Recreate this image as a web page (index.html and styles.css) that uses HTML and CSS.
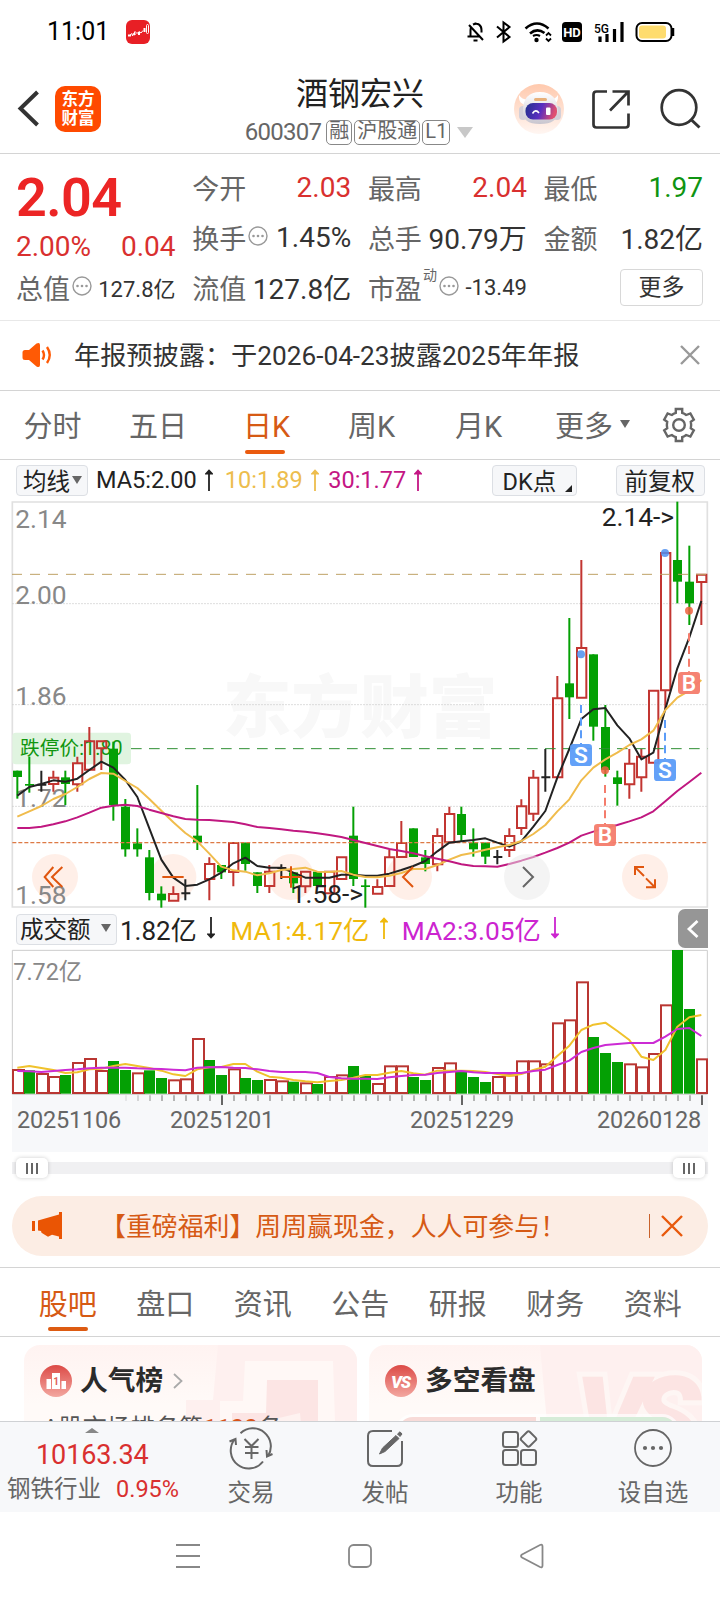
FILE: index.html
```html
<!DOCTYPE html>
<html lang="zh-CN">
<head>
<meta charset="utf-8">
<meta name="viewport" content="width=720">
<title>酒钢宏兴 600307</title>
<link rel="stylesheet" href="styles.css">
</head>
<body>
<div class="screen">
  <div class="status">
    <span class="clock">11:01</span>
    <svg class="app-dot" width="24" height="24" viewBox="0 0 24 24"><rect width="24" height="24" rx="6" fill="#e81f25"/><path d="M2 15.500h3M8 13l1 2M13 12v3M18.500 8v4" stroke="#fff" stroke-width="2"/><path d="M4 15l2-1.500.5 2.500L9 11.500l2 2 2-2 2 1.500 2-2.500" stroke="#fff" fill="none"/><rect x="20.500" y="4.500" width="2" height="9" rx="1" stroke="#fff" fill="none"/></svg>
    <svg class="sys" width="216" height="26" viewBox="464 19 216 26" fill="none" stroke="#000" stroke-width="2">
      <path d="M469 25l14 15M480 36.500h-12.500M470.500 36v-6c0-1.500.4-2.700 1-3.600M473 24.500c5-2.500 8.500 1 8.500 5.500v2.500M473.500 40.500h4M475.500 22.500v2"/>
      <path d="M497 26.500l12.500 10.500-6 4.500v-19l6 4.500-12.500 10.500"/>
      <path d="M525.500 28.500q11.500-10 23 0M530 33.500q7-6 14.500-.5" stroke-width="2.600"/><circle cx="536.500" cy="40" r="2.200" fill="#000" stroke="none"/><path d="M533 36q3.500-2 7 0" stroke-width="2.200"/><path d="M546 35.500l2.500-2.500 2.500 2.500M546 38.500l2.500 2.500 2.500-2.500" stroke-width="1.800"/>
      <rect x="562" y="22" width="20" height="20" rx="3.500" fill="#000" stroke="none"/>
      <text x="572" y="37" class="hd">HD</text>
      <text x="594" y="32.500" class="g5">5G</text>
      <path d="M600 36.500v5.500M607 34v8M614.500 29v13M622 22v20" stroke-width="3.200"/>
      <rect x="636.500" y="23" width="35" height="18" rx="5.500"/><rect x="639" y="25.500" width="27" height="13" rx="3" fill="#fedc6e" stroke="none"/><path d="M673 28v8" stroke-width="2.500"/>
    </svg>
  </div>

  <header class="titlebar">
    <svg class="back" width="24" height="40" viewBox="0 0 24 40"><path d="M20.500 3L3.500 19.500 20.500 36" fill="none" stroke="#333" stroke-width="4"/></svg>
    <div class="logo"><span>东方</span><span>财富</span></div>
    <div class="name">
      <h1>酒钢宏兴</h1>
      <p><span class="code">600307</span><i>融</i><i>沪股通</i><i>L1</i><b class="tri"></b></p>
    </div>
    <svg class="tools" width="190" height="52" viewBox="512 82 190 52" fill="none" stroke="#333">
      <defs>
        <linearGradient id="peach" x1="0" y1="0" x2="0" y2="1"><stop offset="0" stop-color="#ffc9ad"/><stop offset="1" stop-color="#fff6f2"/></linearGradient>
        <linearGradient id="visor" x1="0" y1="0" x2="1" y2=".2"><stop offset="0" stop-color="#20308c"/><stop offset=".55" stop-color="#5a2ec0"/><stop offset="1" stop-color="#e05070"/></linearGradient>
        <linearGradient id="shell" x1="0" y1="0" x2="0" y2="1"><stop offset="0" stop-color="#fff"/><stop offset="1" stop-color="#c9c6cf"/></linearGradient>
      </defs>
      <g stroke="none">
        <circle cx="539" cy="109" r="25" fill="url(#peach)"/>
        <path d="M519 95q-1 10 9 10l3-6q-8 2-12-4zM558 95q1 10-9 10l-3-6q8 2 12-4z" fill="#fff"/>
        <rect x="519" y="106" width="8" height="14" rx="4" fill="#d4d0d8"/><rect x="553" y="106" width="8" height="14" rx="4" fill="#d4d0d8"/>
        <path d="M523 111q0-19 17-19t18 19q0 13-18 13t-17-13z" fill="url(#shell)"/>
        <rect x="534" y="98" width="13" height="3" rx="1.500" fill="#e8b07a"/>
        <rect x="525.500" y="103" width="31.500" height="16.500" rx="7.500" fill="url(#visor)"/>
        <rect x="546" y="107.500" width="4.500" height="7.500" rx="1" fill="#fff"/>
      </g>
      <path d="M532.500 113.500q3.200-5 6.500-.5" stroke="#fff" stroke-width="1.600"/>
      <path d="M607 91.500h-10.500q-3 0-3 3v30q0 3 3 3h29q3 0 3-3v-11M612.500 91.500h16v14M628 92l-18 18.500" stroke-width="2.700"/>
      <circle cx="679" cy="107.500" r="17.300" stroke-width="2.700"/><path d="M690.500 119l9 8.500" stroke-width="3"/>
    </svg>
  </header>

  <section class="quote">
    <div class="col main">
      <strong>2.04</strong>
      <div class="chg"><span>2.00%</span><span>0.04</span></div>
      <div class="cell"><label>总值</label><svg class="dots"><use href="#more"/></svg><em class="sm">127.8亿</em></div>
    </div>
    <div class="col">
      <div class="cell"><label>今开</label><em class="red">2.03</em></div>
      <div class="cell"><label>换手</label><svg class="dots"><use href="#more"/></svg><em>1.45%</em></div>
      <div class="cell"><label>流值</label><em>127.8亿</em></div>
    </div>
    <div class="col">
      <div class="cell"><label>最高</label><em class="red">2.04</em></div>
      <div class="cell"><label>总手</label><em>90.79万</em></div>
      <div class="cell"><label>市盈</label><sup>动</sup><svg class="dots"><use href="#more"/></svg><em class="sm">-13.49</em></div>
    </div>
    <div class="col">
      <div class="cell"><label>最低</label><em class="green">1.97</em></div>
      <div class="cell"><label>金额</label><em>1.82亿</em></div>
      <div class="cell"><button class="more">更多</button></div>
    </div>
    <svg width="0" height="0"><symbol id="more" viewBox="0 0 20 20"><circle cx="10" cy="10" r="9" fill="none" stroke="#999" stroke-width="1.400"/><g fill="#999"><circle cx="5.500" cy="10" r="1.300"/><circle cx="10" cy="10" r="1.300"/><circle cx="14.500" cy="10" r="1.300"/></g></symbol></svg>
  </section>

  <section class="notice">
    <svg width="30" height="26" viewBox="0 0 30 26"><path d="M3 8h4l7.500-6.500Q18 0 18 3v20q0 3-3.500 1.500L7 18H3q-2.500 0-2.500-2.500v-5Q.5 8 3 8z" fill="#ff5a05"/><path d="M20.500 8.500q3 4.500 0 9M25 5q5.500 8 0 16" fill="none" stroke="#ff5a05" stroke-width="2.400"/></svg>
    <span>年报预披露：于2026-04-23披露2025年年报</span>
    <svg class="close" width="20" height="20" viewBox="0 0 20 20"><path d="M1 1l18 18M19 1L1 19" stroke="#999" stroke-width="2.400"/></svg>
  </section>

  <nav class="periods">
    <a>分时</a><a>五日</a><a class="on">日K</a><a>周K</a><a>月K</a><a>更多<b class="tri"></b></a>
    <svg width="36" height="36" viewBox="0 0 36 36" fill="none" stroke="#666" stroke-width="2.400"><path d="M14.800 2h6.400v3.800q2.300.8 4 2.200l4.200-1.600 3.400 6.200-3 2.200q.7 3.200 0 6.400l3 2.200-3.400 6.200-4.200-1.600q-1.700 1.400-4 2.200V34h-6.400v-3.800q-2.300-.8-4-2.200l-4.200 1.600-3.400-6.200 3-2.200q-.7-3.200 0-6.400l-3-2.200 3.400-6.200L10.800 8q1.700-1.400 4-2.200z"/><circle cx="18" cy="18" r="5.800"/></svg>
  </nav>

  <div class="legend ma">
    <span class="chip">均线<b class="tri"></b></span>
    <span class="k">MA5:2.00<svg class="arr"><use href="#up"/></svg></span>
    <span class="y">10:1.89<svg class="arr"><use href="#up"/></svg></span>
    <span class="m">30:1.77<svg class="arr"><use href="#up"/></svg></span>
    <span class="chip dk">DK点<svg class="corner" viewBox="0 0 7 7"><path d="M7 0v7H0z" fill="#222"/></svg></span>
    <span class="chip fq">前复权</span>
    <svg width="0" height="0"><symbol id="up" viewBox="0 0 8 22"><path d="M4 22V2M1.300 4.500L4 1.500l2.700 3z" fill="currentColor" stroke="currentColor" stroke-width="1.800"/></symbol><symbol id="down" viewBox="0 0 8 22"><path d="M4 0v20M1.300 17.500L4 20.500l2.700-3z" fill="currentColor" stroke="currentColor" stroke-width="1.800"/></symbol></svg>
  </div>

  <svg id="price" class="plot" width="720" height="410" viewBox="0 -450 2160 1230"></svg>

  <div class="legend vol">
    <span class="chip">成交额<b class="tri"></b></span>
    <span class="k">1.82亿<svg class="arr"><use href="#down"/></svg></span>
    <span class="y">MA1:4.17亿<svg class="arr"><use href="#up"/></svg></span>
    <span class="m">MA2:3.05亿<svg class="arr"><use href="#down"/></svg></span>
    <span class="drawer"><svg width="14" height="20" viewBox="0 0 14 20"><path d="M11.500 2L3 10l8.500 8" fill="none" stroke="#fff" stroke-width="2.800"/></svg></span>
  </div>

  <svg id="volume" class="plot" width="720" height="146" viewBox="0 57 2160 438"></svg>

  <div class="axis">
    <svg id="ticks" width="696" height="12" viewBox="36 497 2088 36"></svg>
    <div class="dates"><span>20251106</span><span>20251201</span><span>20251229</span><span>20260128</span></div>
  </div>

  <div class="slider"><i class="grip"><b></b><b></b><b></b></i><i class="grip"><b></b><b></b><b></b></i></div>

  <section class="promo">
    <svg width="30" height="28" viewBox="0 0 30 28" fill="#ea5504"><path d="M0 9h3v10H0zM6 8.500L27 2.500V0h3v27h-3v-2.500l-7-1.800-4 2-6.500-4L9 19l-3-.5z"/></svg>
    <span class="msg">【重磅福利】周周赢现金，人人可参与！</span>
    <span class="bar"></span>
    <svg width="22" height="22" viewBox="0 0 22 22"><path d="M1 1l20 20M21 1L1 21" stroke="#e8590c" stroke-width="2.400"/></svg>
  </section>

  <nav class="tabs"><a class="on">股吧</a><a>盘口</a><a>资讯</a><a>公告</a><a>研报</a><a>财务</a><a>资料</a></nav>

  <section class="cards">
    <article class="card">
      <svg class="deco" width="333" height="100" viewBox="0 0 333 100"><path d="M194 0h139v100H162V55h27z" fill="#fef0ef"/><path d="M221 16h88l2 60v24h-30l-8-20H196V56h23z" fill="#fff8f6"/><path d="M243 35h51v65h-86V68h34z" fill="#fce5e4"/><path d="M242 76l34-8 3 32h-37z" fill="#fef2f0"/></svg>
      <h2><svg width="32" height="32" viewBox="0 0 32 32"><use href="#disc"/><path d="M6.500 14h4.500v10H6.500zM12 8h8v16h-8zM21.500 16H26v8h-4.500z" fill="#fff"/><text x="16" y="20" class="no1">1</text></svg>人气榜<svg class="chev" width="10" height="18" viewBox="0 0 10 18"><path d="M1 2l7.500 7L1 16" fill="none" stroke="#aaa" stroke-width="1.800"/></svg></h2>
      <p>A股市场排名第<b>1100</b>名</p>
    </article>
    <article class="card">
      <svg class="deco" width="333" height="77" viewBox="0 0 333 77"><path d="M171 0h162v100H180z" fill="#fef0ef"/><text x="206" y="112" class="vs-lg">VS</text></svg>
      <h2><svg width="32" height="32" viewBox="0 0 32 32"><use href="#disc"/><text x="15.500" y="22.500" class="vs">VS</text></svg>多空看盘</h2>
      <div class="versus"><i></i><i></i></div>
    </article>
    <svg width="0" height="0"><defs><linearGradient id="dg" x1="0" y1="0" x2="0" y2="1"><stop offset="0" stop-color="#dc4a46"/><stop offset="1" stop-color="#f3a7a0"/></linearGradient></defs><symbol id="disc" viewBox="0 0 32 32"><circle cx="16" cy="16" r="16" fill="url(#dg)"/></symbol></svg>
  </section>

  <footer class="dock">
    <div class="index"><b class="caret"></b><strong>10163.34</strong><p><span>钢铁行业</span><em>0.95%</em></p></div>
    <a><svg width="44" height="40" viewBox="0 0 44 40" fill="none" stroke="#666" stroke-width="2"><path d="M11.500 5.200A18 18 0 0 1 39 28M34 33.500A18 18 0 0 1 5.500 11.500M.5 13.500l6-2.500.5 6M43.500 26l-5.500 2.500-.5-6.500M15.500 11l7 7 7-7M22.500 18v13M16 19h13.500M16 25h13.500"/></svg>交易</a>
    <a><svg width="40" height="40" viewBox="0 0 40 40" fill="none" stroke="#666" stroke-width="2"><path d="M27 3H8Q3 3 3 8v25q0 5 5 5h24q5 0 5-5V13"/><path d="M14.500 26l3-6L31 7.500l3 3L20 23.500zM32.500 6l2.500-2.200 2 2.200-2 2.500z" fill="#666" stroke-width="1"/></svg>发帖</a>
    <a><svg width="40" height="40" viewBox="0 0 40 40" fill="none" stroke="#666" stroke-width="2"><rect x="4" y="4" width="15" height="15" rx="2.500"/><rect x="4" y="22" width="15" height="15" rx="2.500"/><rect x="22" y="22" width="15" height="15" rx="2.500"/><rect x="23.500" y="5" width="12" height="12" rx="2" transform="rotate(45 29.500 11)"/></svg>功能</a>
    <a><svg width="40" height="40" viewBox="0 0 40 40" fill="none" stroke="#666" stroke-width="1.800"><circle cx="20" cy="20" r="18"/><g fill="#666" stroke="none"><circle cx="12" cy="20" r="2.100"/><circle cx="20" cy="20" r="2.100"/><circle cx="28" cy="20" r="2.100"/></g></svg>设自选</a>
  </footer>

  <div class="sysnav">
    <svg width="24" height="26" viewBox="0 0 24 26"><path d="M0 2h24M0 13h24M0 24h24" stroke="#888" stroke-width="1.800"/></svg>
    <svg width="24" height="26" viewBox="0 0 24 26"><rect x="1" y="2" width="22" height="22" rx="4.500" fill="none" stroke="#888" stroke-width="1.800"/></svg>
    <svg width="24" height="26" viewBox="0 0 24 26"><path d="M2 11.500L20 2q2.500-1 2.500 1.500v19q0 2.500-2.500 1.500L2 14.500q-2-1.500 0-3z" fill="none" stroke="#888" stroke-width="1.800"/></svg>
  </div>
</div>
<script src="chart.js"></script>
</body>
</html>
```
FILE: styles.css
```css
* { box-sizing: border-box; }
body { margin: 0; background: #fff; color: #333; font-family: Roboto, "Noto Sans CJK SC", sans-serif; }
h1, h2, p { margin: 0; font-weight: 400; }
em, i { font-style: normal; }
svg { display: block; flex: none; }
.screen { width: 720px; height: 1600px; display: flex; flex-direction: column; overflow: hidden; }
.screen > * { flex: none; }
.tri { display: inline-block; width: 0; height: 0; border: solid transparent; border-width: 8px 5px 0; border-top-color: #666; }

/* status bar */
.status { height: 64px; display: flex; align-items: center; padding: 0 40px 0 47px; color: #000; }
.clock { font-size: 25px; line-height: 30px; width: 79px; }
.sys { margin-left: auto; }
.hd { font: 700 13px Roboto, sans-serif; fill: #fff; stroke: none; text-anchor: middle; }
.g5 { font: 500 12px Roboto, sans-serif; fill: #000; stroke: none; }

/* title */
.titlebar { height: 90px; border-bottom: 1px solid #d4d4d4; display: flex; align-items: flex-start; padding: 0 18px 0 17px; }
.back { margin-top: 25px; }
.logo { margin: 22px 0 0 14px; width: 46px; height: 46px; border-radius: 10px; background: #ff4a00; color: #fff; font-size: 16.500px; font-weight: 700; line-height: 19px; display: flex; flex-direction: column; align-items: center; justify-content: center; }
.name { width: 411px; display: flex; flex-direction: column; align-items: center; }
.name h1 { font-size: 32px; line-height: 40px; margin-top: 10px; margin-left: 107px; color: #222; }
.name p { display: flex; align-items: center; height: 28px; margin: 4px 0 0 105px; color: #666; font-size: 24px; }
.name .code { letter-spacing: -.7px; margin-right: 5px; }
.name i { border: 1.500px solid #888; border-radius: 5px; height: 25px; font-size: 20px; line-height: 20px; padding: 0 2px; margin-right: 2px; }
.name .tri { border-width: 11px 8px 0; border-top-color: #c8c8c8; margin-left: 5px; }
.tools { margin: 18px 0 0; }

/* quote */
.quote { height: 167px; border-bottom: 1px solid #e8e8e8; padding: 8px 0 0 16px; display: grid; grid-template-columns: 159.500px 159px 159px 159.500px; column-gap: 16.700px; align-content: start; position: relative; }
.cell { height: 50px; display: flex; align-items: center; font-size: 28px; white-space: nowrap; }
.cell label { font-size: 27px; color: #666; }
.cell em { margin-left: auto; }
.cell .sm { font-size: 22px; }
.cell sup { font-size: 14px; line-height: 14px; color: #666; align-self: flex-start; margin: 6px 0 0 1px; }
.cell .dots { width: 20px; height: 20px; margin: -2px 0 0 2px; }
.red { color: #d9302f; }
.green { color: #0f9412; }
.main { color: #d9302f; }
.main .cell { color: #333; margin-top: -1px; }
.main strong { display: block; height: 68px; font-size: 54px; line-height: 71px; font-weight: 600; letter-spacing: -.6px; color: #ec2525; }
.chg { height: 33px; display: flex; justify-content: space-between; font-size: 28px; line-height: 33px; }
.more { width: 83px; height: 37px; margin-left: auto; border: 1.500px solid #d8d8d8; border-radius: 4px; background: #fff; color: #333; font: 23px/31px Roboto, "Noto Sans CJK SC", sans-serif; padding: 0; }

.notice { height: 70px; border-bottom: 1px solid #d4d4d4; display: flex; align-items: center; padding: 0 20px 0 22px; font-size: 26.200px; }
.notice span { margin: -4px 0 0 22px; flex: 1; white-space: nowrap; }
.notice svg { margin-top: -1px; }

/* period tabs */
.periods { height: 69px; border-bottom: 1px solid #d4d4d4; display: grid; grid-template-columns: 105.500px 114px 105px 107px 100px 106px 36px; align-items: center; padding-left: 23.500px; font-size: 29px; color: #666; }
.periods a { position: relative; white-space: nowrap; line-height: 44px; padding-top: 4px; }
.periods .tri { margin: 0 0 9px 7px; }
.on { color: #d65a14; }
.periods .on::after { content: ""; position: absolute; left: 2px; bottom: -5px; width: 40px; height: 4px; border-radius: 2px; background: #ea5a0e; }

/* indicator legends */
.legend { height: 40px; display: flex; align-items: center; font-size: 23.500px; white-space: nowrap; color: #222; padding-left: 16px; position: relative; }
.legend > span { display: flex; align-items: center; }
.legend .chip { height: 31px; padding: 0 0 1px 6px; border: 1.500px solid #dcdfe4; border-radius: 4px; background: #f6f7f9; }
.arr { width: 8px; height: 22px; margin-left: 8px; }
.legend .y { color: #edbd4d; }
.legend .m { color: #c41684; }
.ma .chip:first-child { width: 72px; }
.ma .chip .tri { margin-left: 2px; }
.ma .k { margin-left: 8px; }
.ma .y { margin-left: 12px; }
.ma .m { margin-left: 9.500px; }
.legend .dk { margin-left: auto; width: 85px; padding-left: 10px; position: relative; }
.corner { position: absolute; right: 4px; bottom: 3px; width: 7px; height: 7px; }
.legend .fq { margin: 0 15.500px 0 39px; width: 89px; padding-left: 8px; }
.vol { height: 39px; }
.legend.vol .chip { width: 101px; padding: 0 0 3px 3px; }
.vol .chip .tri { margin-left: 10px; }
.vol .k, .vol .y, .vol .m { padding-bottom: 3px; }
.vol .k { margin-left: 3px; font-size: 26px; }
.legend.vol .y { margin-left: 15px; color: #f0b90c; font-size: 26.300px; }
.legend.vol .m { margin-left: 14px; color: #cc24d0; font-size: 26.300px; }
.vol .arr { margin-left: 10.500px; }
.drawer { position: absolute; right: 12px; top: -1px; width: 30px; height: 39px; border-radius: 7px 0 0 7px; background: #969696; justify-content: center; }

/* plot text */
.plot text { font-family: Roboto, "Noto Sans CJK SC", sans-serif; }
.plot .scale { font-size: 79px; fill: #888; }
.plot .peak { font-size: 79px; fill: #222; }
.plot .limit { font-size: 59px; fill: #10960f; }
.plot .mark { font: 900 206px "Noto Sans CJK SC", sans-serif; fill: #f8f8f8; }
.plot .flag { font-size: 68px; font-weight: 600; fill: #fff; text-anchor: middle; }
.plot .cap { font-size: 70px; fill: #888; }

.axis { margin: 0 12px; height: 57px; background: #f7f8fa; }
.dates { display: grid; grid-template-columns: 153px 240px 187px auto; padding-left: 5px; margin-top: -1px; font-size: 23.500px; line-height: 28px; color: #666; letter-spacing: -.2px; }

.slider { margin: 4px 12px 0; height: 24px; display: flex; justify-content: space-between; align-items: center; padding: 0 3px 0 4px; background: linear-gradient(#f0f0f2, #f0f0f2) center / 100% 12px no-repeat; }
.grip { width: 32px; height: 20px; border-radius: 5px; background: #fff; box-shadow: 0 0 4px rgba(0, 0, 0, .2); display: flex; justify-content: center; align-items: center; gap: 3px; }
.grip b { width: 2px; height: 11px; background: #666; }

.promo { margin: 16px 12px 0; height: 60px; border-radius: 30px; background: #fcede4; display: flex; align-items: center; padding: 0 25px 0 20px; color: #d65a14; font-size: 25.900px; }
.msg { margin: -3px 0 0 38px; white-space: nowrap; }
.bar { width: 1.500px; height: 24px; background: #c9622b; margin: 0 11px 0 auto; }

.tabs { margin-top: 11px; height: 70px; border: solid #d4d4d4; border-width: 1px 0; display: grid; grid-template-columns: repeat(7, 97.500px); padding-left: 19px; font-size: 29px; color: #666; text-align: center; }
.tabs a { position: relative; line-height: 75px; height: 68px; }
.tabs .on::after { content: ""; position: absolute; left: 29px; bottom: 5px; width: 40px; height: 4px; border-radius: 2px; background: #dd5b12; }

/* cards, cut off by the dock */
.cards { height: 84px; padding: 8px 18px 0 24px; display: flex; gap: 12px; overflow: hidden; }
.card { width: 333px; height: 150px; flex: none; border-radius: 16px; background: linear-gradient(#fff3f1, #fffaf8 60px); position: relative; overflow: hidden; }
.deco { position: absolute; left: 0; top: 0; }
.card h2 { position: relative; display: flex; align-items: center; height: 71px; padding-left: 16px; gap: 8px; font-size: 27.700px; line-height: 36px; font-weight: 700; color: #2b2b2b; }
.chev { margin-left: 2px; }
.card p { position: relative; margin: -4px 0 0 19px; font-size: 24px; line-height: 32px; color: #555; }
.card p b { color: #d8541a; }
.versus { position: relative; margin: 1px 25px 0 29px; height: 30px; display: flex; gap: 4px; box-shadow: 0 0 0 3px rgba(255,255,255,.7); border-radius: 15px; overflow: hidden; }
.versus i { flex: 1; background: #f8dbd8; }
.versus i + i { background: #d6ecd8; }
.no1 { font: 700 10px Roboto, sans-serif; fill: #e0605a; text-anchor: middle; }
.vs { font: italic 900 17px Roboto, sans-serif; fill: #fff; text-anchor: middle; letter-spacing: -1px; }
.vs-lg { font: italic 900 112px Roboto, sans-serif; fill: #fce4e3; stroke: #fef6f4; stroke-width: 10px; paint-order: stroke; letter-spacing: -14px; }

.dock { height: 91px; border-top: 1px solid #cfd1d4; background: #f7f8fa; display: grid; grid-template-columns: 184px repeat(4, 134px); color: #666; font-size: 23.500px; }
.dock a { display: flex; flex-direction: column; align-items: center; padding-top: 6px; line-height: 35px; gap: 8px; }
.dock svg { overflow: visible; }
.index { position: relative; padding-top: 14px; }
.index .caret { position: absolute; left: 85px; top: 6px; border: solid transparent; border-width: 0 7px 5px; border-bottom-color: #888; }
.index strong { display: block; margin-left: 36px; font-size: 27px; line-height: 38px; letter-spacing: -.1px; font-weight: 400; color: #d9302f; }
.index p { display: flex; margin-left: 7px; line-height: 30px; }
.index em { margin-left: 15px; color: #d9302f; }

.sysnav { height: 88px; display: flex; justify-content: center; align-items: center; gap: 148px; }
```
FILE: chart.js
```js
// Plot units are thirds of a pixel; one trading day is 36 units wide.
const X0 = 52, STEP = 36;
const at = i => X0 + STEP * i;
const RED = '#c23531', GREEN = '#04a004', BLACK = '#222';

// [kind, high, body top, body bottom, low]
const days = [
  ['g',362,362,381,446],['g',320,402,407,428],['k',362,404,404,425],['r',362,381,403,425],['g',362,382,402,465],
  ['r',320,338,404,425],['r',231,272,360,360],['r',272,272,296,360],['g',275,296,465,512],['g',447,470,598,620],
  ['g',535,580,598,620],['g',600,622,729,751],['g',709,731,751,773],['r',709,730,753,753],['k',688,730,730,751],
  ['g',405,557,576,600],['r',622,640,688,751],['g',645,645,667,687],['r',577,577,667,709],['g',578,578,642,662],
  ['g',667,667,708,729],['r',645,663,709,729],['k',643,654,654,687],['g',667,667,700,729],['r',662,663,710,729],
  ['g',665,665,708,708],['r',663,663,731,731],['r',620,620,688,688],['g',470,557,687,708],['g',688,706,711,773],
  ['r',688,709,732,732],['r',600,620,709,709],['r',513,577,622,622],['g',535,535,621,621],['g',600,622,642,664],
  ['r',535,556,644,664],['r',470,490,578,578],['g',470,492,555,574],['g',535,578,598,620],['g',578,578,620,642],
  ['k',600,621,621,643],['r',535,556,601,621],['r',448,467,535,555],['r',360,381,492,513],['k',297,382,382,425],
  ['r',78,143,383,383],['g',-96,100,142,207],['r',-270,-8,144,144],['g',13,13,230,272],['g',165,231,360,380],
  ['g',362,382,402,467],['r',297,339,404,446],['r',297,318,383,425],['r',120,120,339,339],['r',-293,-293,122,180],
  ['g',-445,-270,-205,-140],['g',-313,-205,-140,-75],['r',-228,-228,-203,-75]
];
const ma5 = [437,411,402,391,395,386,360,335,353,390,441,535,629,683,708,704,688,668,640,623,648,653,653,668,683,683,683,674,674,677,677,671,660,648,633,604,578,574,570,565,578,590,574,530,483,383,297,207,178,174,226,265,328,308,177,55,-38,-147];
const ma10 = [500,484,468,447,432,411,387,369,371,393,414,447,482,517,549,574,611,650,661,665,676,670,660,657,653,665,666,663,674,681,682,677,669,657,657,645,629,615,608,599,592,585,573,552,525,484,448,391,353,328,308,285,268,242,180,143,122,90];
const ma30 = [534,534,530,523,514,502,488,473,467,464,468,479,489,499,507,509,510,513,516,523,531,534,538,542,545,550,555,561,570,579,588,597,603,610,619,626,634,643,648,649,650,642,632,621,608,594,578,557,545,534,525,514,502,484,454,423,396,368];

const line = (v, color, w) =>
  `<polyline points="${v.map((y, i) => at(i) + ',' + y).join(' ')}" fill="none" stroke="${color}" stroke-width="${w}" stroke-linejoin="round"/>`;
const rule = (y, x, color, dash, w) =>
  `<path d="M${x} ${y}H2122" stroke="${color}" stroke-width="${w}" stroke-dasharray="${dash}"/>`;

function candle([kind, hi, top, bot, lo], i) {
  const x = at(i);
  if (kind === 'k') return `<path d="M${x} ${hi}V${lo}M${x - 12} ${top}h27" stroke="${BLACK}" stroke-width="6"/>`;
  if (kind === 'g') return `<path d="M${x} ${hi}V${lo}" stroke="${GREEN}" stroke-width="6"/><rect x="${x - 13}" y="${top}" width="27" height="${bot - top}" fill="${GREEN}"/>`;
  return `<path d="M${x} ${hi}V${top}M${x} ${bot}V${lo}M${x - 13} ${top + 2}h28V${bot - 1}h-28z" fill="none" stroke="${RED}" stroke-width="6"/>`;
}

function flag(x, y, letter, from, dotY) {
  const c = letter === 'S' ? '#5b9cf8' : '#f47c6c';
  const d = letter === 'S' ? '#4f8ff0' : '#ee6040';
  return `<path d="M${x} ${from}V${y - 33}" stroke="${c}" stroke-width="6" stroke-dasharray="24 14"/>` +
    `<circle cx="${x}" cy="${dotY}" r="12" fill="${d}" opacity=".85"/>` +
    `<rect x="${x - 33}" y="${y - 33}" width="66" height="66" rx="10" fill="${c}" opacity=".95"/>` +
    `<text class="flag" x="${x}" y="${y + 24}">${letter}</text>`;
}

const pad = (x, glyph, grey) =>
  `<circle cx="${x}" cy="681" r="69" fill="${grey ? '#eaeaea' : '#ffe0d2'}" opacity=".5"/><path d="${glyph}" fill="none" stroke="${grey ? '#666' : '#e0560f'}" stroke-width="6"/>`;

document.getElementById('price').innerHTML =
  '<text class="mark" x="668" y="246" textLength="824">东方财富</text>' +
  '<path d="M37 771V-444H2122V771z" fill="none" stroke="#e0e0e0" stroke-width="5"/>' +
  rule(-139, 37, '#ccc', '4 5', 3) + rule(164, 37, '#ccc', '4 5', 3) + rule(469, 37, '#ccc', '4 5', 3) +
  pad(165, '') + pad(520, '') + pad(873, '') + pad(1227, '') +
  '<rect x="37" y="248" width="356" height="95" rx="10" fill="#e0f4e0"/><text class="limit" x="60" y="316" textLength="308">跌停价:1.80</text>' +
  [['2.14', -367], ['2.00', -139], ['1.86', 164], ['1.72', 471], ['1.58', 762]].map(([t, y]) => `<text class="scale" x="46" y="${y}">${t}</text>`).join('') +
  days.map(candle).join('') +
  rule(-227, 36, '#bfa266', '30 24', 3) + rule(296, 393, '#2f8f33', '32 22', 3) + rule(578, 37, '#dd7a45', '12 6', 4) +
  line(ma5, '#222', 6) + line(ma10, '#f0bc4c', 6) + line(ma30, '#c01880', 6) +
  flag(1743, 315, 'S', 165, 13) + flag(1815, 555, 'B', 405, 361) + flag(1995, 360, 'S', 210, -291) + flag(2067, 99, 'B', -50, -118) +
  '<text class="peak" x="1805" y="-372">2.14-&gt;</text><text class="peak" x="872" y="759">1.58-&gt;</text>' +
  '<path d="M160 651l-26 30 26 30M187 651l-31 30 31 30M487 681h64M840 681h65M873 649v64M1239 651l-30 30 30 30" fill="none" stroke="#e0560f" stroke-width="6"/>' +
  pad(1581, 'M1569 651l30 30-30 30', true) +
  pad(1935, 'M1905 675v-24h27M1906 652l26 26M1965 688v24h-27M1964 711l-26-26');

const tops = [419,421,431,440,435,398,386,422,393,420,429,421,444,450,447,326,390,435,417,444,450,449,453,455,459,462,440,435,408,437,461,408,408,441,450,413,399,426,441,456,440,435,393,393,402,279,270,156,321,369,396,402,411,371,225,60,237,387];
const kinds = 'rgrrgrrrggrggrrrggrggrrgrgrrggrrrggrrgggrrrrrrrrgggrrrrggr';
const vma1 = [413,408,414,420,429,427,418,416,408,402,408,414,422,433,438,418,412,411,402,402,425,440,443,450,454,457,453,450,443,435,435,428,423,430,434,422,422,422,423,426,432,438,432,420,410,378,347,300,284,278,303,330,380,390,360,290,262,255];
const vma2 = [423,424,426,423,420,418,415,413,413,413,415,416,417,419,421,413,412,411,413,414,418,423,426,426,426,429,441,445,446,446,447,442,438,435,434,429,426,423,427,429,429,429,429,423,419,405,392,366,354,345,342,339,339,339,320,297,294,318];

document.getElementById('volume').innerHTML =
  '<path d="M37 493V61H2122V493z" fill="none" stroke="#ccc" stroke-width="3"/><text class="cap" x="40" y="150">7.72亿</text>' +
  tops.map((t, i) => kinds[i] === 'g'
    ? `<rect x="${at(i) - 16}" y="${t}" width="33" height="${491 - t}" fill="${GREEN}"/>`
    : `<rect x="${at(i) - 13}" y="${t + 1}" width="${i === 57 ? 30 : 33}" height="${488 - t}" fill="#fff" stroke="#b93632" stroke-width="6"/>`).join('') +
  line(vma1, '#f0c22c', 6) + line(vma2, '#cc2bd4', 6);

document.getElementById('ticks').innerHTML = Array.from({ length: 49 }, (_, k) => {
  const i = k + 9, big = i === 17 || i === 37 || i === 57;
  return `<path d="M${at(i) + 2} 498v${big ? 29 : 17}" stroke="${big ? '#666' : '#b4b4b4'}" stroke-width="6" opacity="${Math.min(1, (k + 1) / 4)}"/>`;
}).join('');
```
